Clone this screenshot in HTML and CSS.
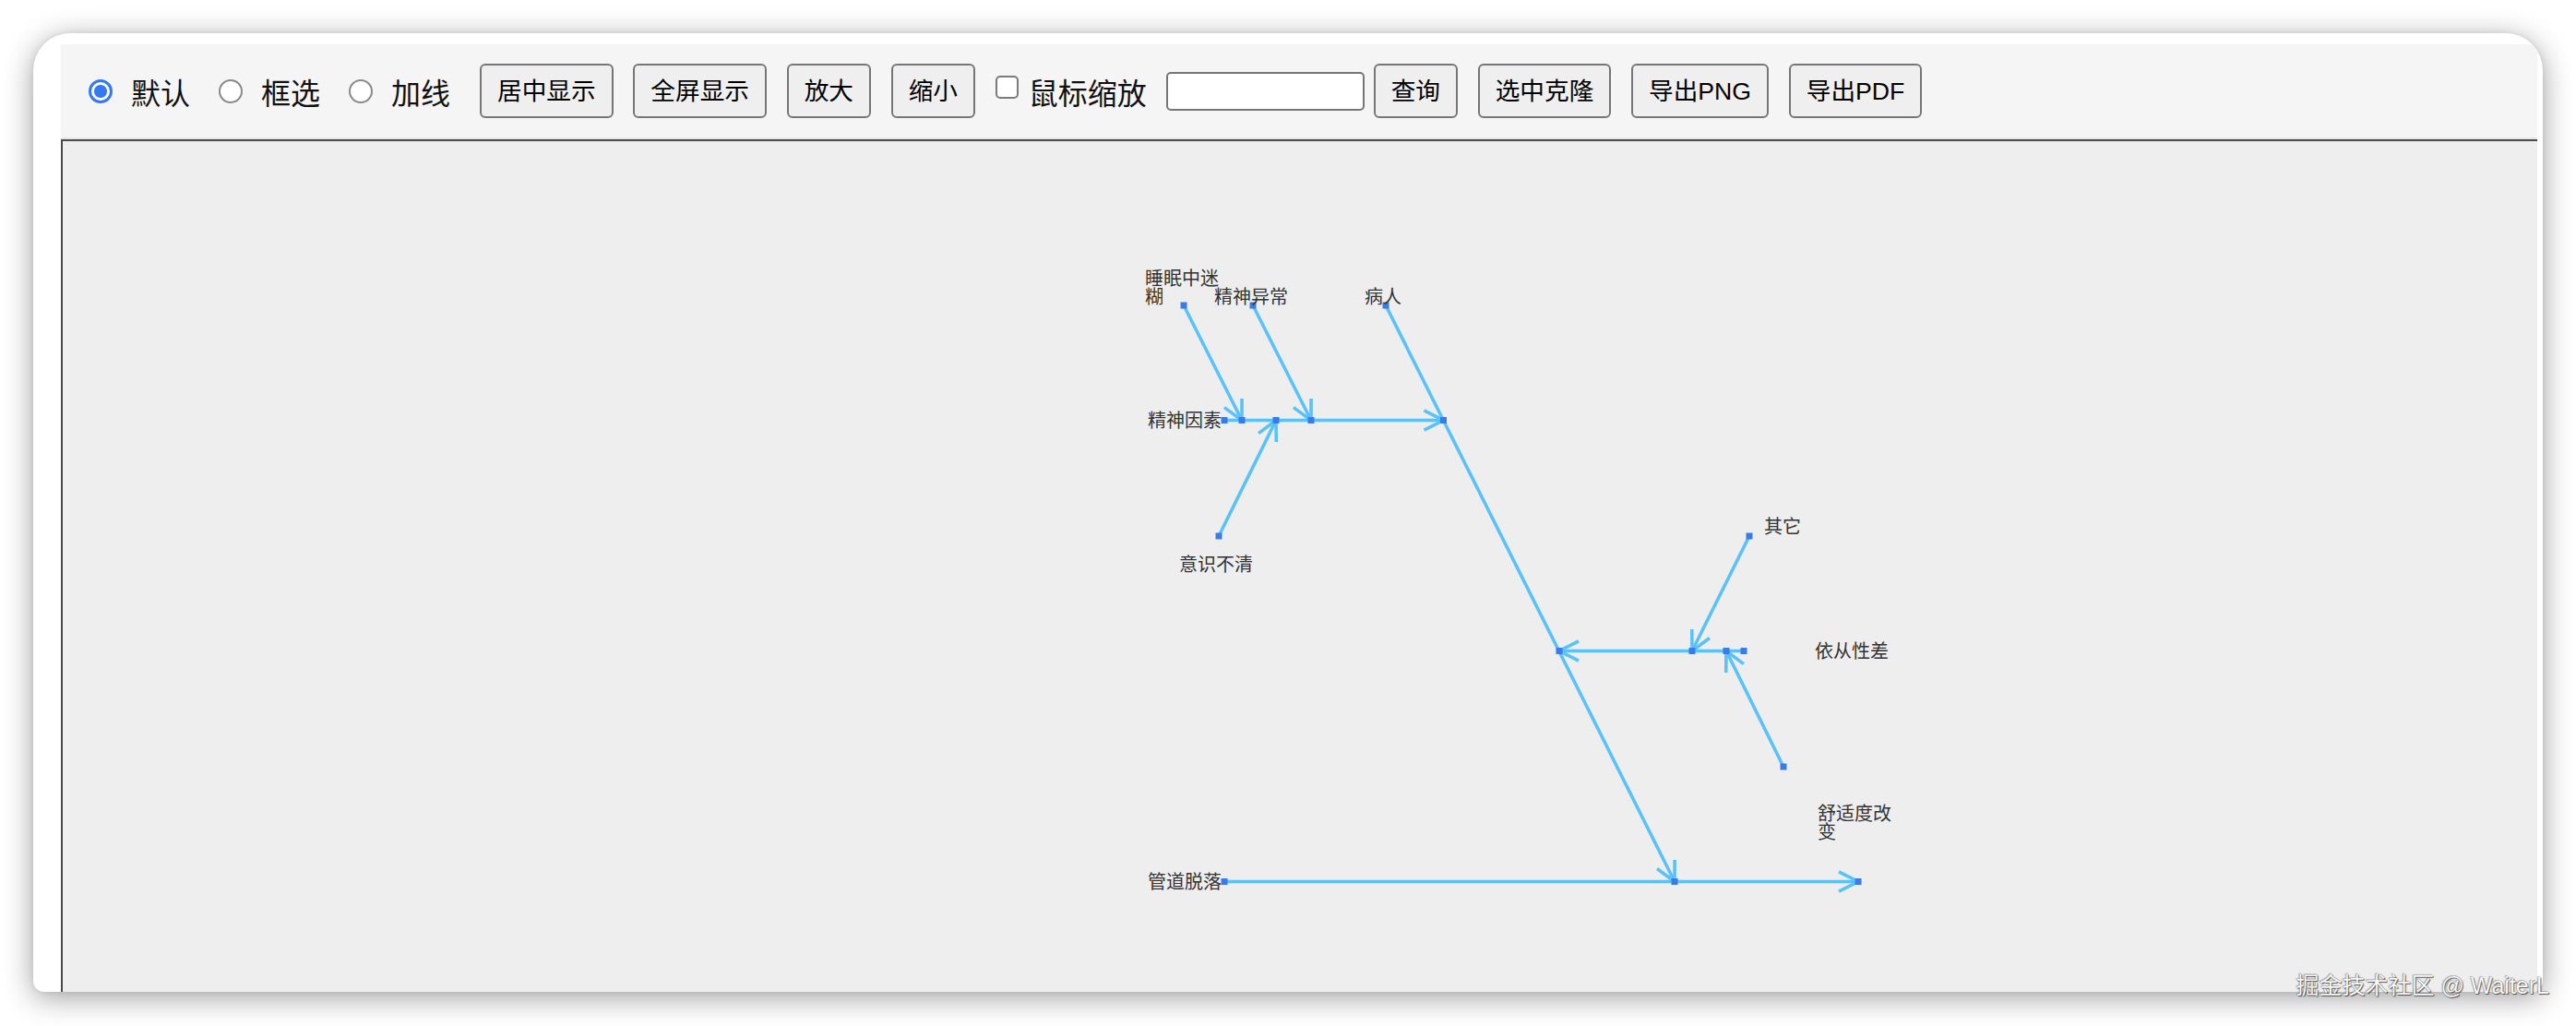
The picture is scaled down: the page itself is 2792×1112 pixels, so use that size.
FILE: index.html
```html
<!DOCTYPE html>
<html lang="zh-CN">
<head>
<meta charset="utf-8">
<title>鱼骨图</title>
<link rel="stylesheet" href="styles.css">
</head>
<body>
<div class="window">
  <div class="app">
    <div class="toolbar">
      <label class="opt"><input class="radio" type="radio" name="mode" checked><span class="opt-text">默认</span></label>
      <label class="opt"><input class="radio" type="radio" name="mode"><span class="opt-text">框选</span></label>
      <label class="opt opt-last"><input class="radio" type="radio" name="mode"><span class="opt-text">加线</span></label>
      <button class="btn">居中显示</button>
      <button class="btn">全屏显示</button>
      <button class="btn">放大</button>
      <button class="btn">缩小</button>
      <label class="check"><input class="checkbox" type="checkbox"><span class="opt-text">鼠标缩放</span></label>
      <input class="search" type="text">
      <button class="btn">查询</button>
      <button class="btn">选中克隆</button>
      <button class="btn">导出PNG</button>
      <button class="btn">导出PDF</button>
    </div>
    <div class="canvas">
      <svg class="diagram" width="2682" height="922" viewBox="68 153 2682 922" xmlns="http://www.w3.org/2000/svg">
        <defs>
          <marker id="arr" markerUnits="userSpaceOnUse" markerWidth="40" markerHeight="40" viewBox="-30 -20 40 40" refX="0" refY="0" orient="auto">
            <path class="ah" d="M-21,-10.7 L0,0 L-21,10.7"/>
          </marker>
        </defs>
        <g class="links">
          <path class="ln" d="M1283 331 L1346 455.5"/>
          <path class="ln" d="M1358 331 L1421 455.5"/>
          <path class="ln" d="M1321 581 L1383 455.5"/>
          <path class="ln" d="M1327 455.5 L1564.5 455.5"/>
          <path class="ln" d="M1502 331 L1815 955.5"/>
          <path class="ln" d="M1890 705.5 L1690 705.5"/>
          <path class="ln" d="M1896 581 L1834 705.5"/>
          <path class="ln" d="M1933 831 L1871 705.5"/>
          <path class="ln" d="M1327 955.5 L2014 955.5"/>
        </g>
        <g class="nodes">
          <rect class="nd" x="1279.5" y="327.5" width="7" height="7"/>
          <rect class="nd" x="1354.5" y="327.5" width="7" height="7"/>
          <rect class="nd" x="1498.5" y="327.5" width="7" height="7"/>
          <rect class="nd" x="1323.5" y="452" width="7" height="7"/>
          <rect class="nd" x="1342.5" y="452" width="7" height="7"/>
          <rect class="nd" x="1379.5" y="452" width="7" height="7"/>
          <rect class="nd" x="1417.5" y="452" width="7" height="7"/>
          <rect class="nd" x="1561" y="452" width="7" height="7"/>
          <rect class="nd" x="1317.5" y="577.5" width="7" height="7"/>
          <rect class="nd" x="1892.5" y="577.5" width="7" height="7"/>
          <rect class="nd" x="1686.5" y="702" width="7" height="7"/>
          <rect class="nd" x="1830.5" y="702" width="7" height="7"/>
          <rect class="nd" x="1867.5" y="702" width="7" height="7"/>
          <rect class="nd" x="1886.5" y="702" width="7" height="7"/>
          <rect class="nd" x="1929.5" y="827.5" width="7" height="7"/>
          <rect class="nd" x="1323.5" y="952" width="7" height="7"/>
          <rect class="nd" x="1811.5" y="952" width="7" height="7"/>
          <rect class="nd" x="2010.5" y="952" width="7" height="7"/>
        </g>
        <g class="labels">
          <text class="lbl" x="1241" y="309">睡眠中迷</text>
          <text class="lbl" x="1241" y="329">糊</text>
          <text class="lbl" x="1316" y="329">精神异常</text>
          <text class="lbl" x="1479" y="329">病人</text>
          <text class="lbl" x="1244" y="463">精神因素</text>
          <text class="lbl" x="1278" y="619">意识不清</text>
          <text class="lbl" x="1912" y="578">其它</text>
          <text class="lbl" x="1967" y="713">依从性差</text>
          <text class="lbl" x="1970" y="889">舒适度改</text>
          <text class="lbl" x="1970" y="909">变</text>
          <text class="lbl" x="1244" y="963">管道脱落</text>
        </g>
      </svg>
    </div>
  </div>
</div>
<div class="watermark">掘金技术社区 @ WaiterL</div>
</body>
</html>
```

FILE: styles.css
```css
html, body {
  margin: 0;
  padding: 0;
}

body {
  width: 2792px;
  height: 1112px;
  box-sizing: border-box;
  padding: 36px 36px 37px 36px;
  background: #ffffff;
  font-family: "Liberation Sans", "Noto Sans CJK SC", sans-serif;
  position: relative;
  overflow: hidden;
}

.window {
  width: 2720px;
  height: 1039px;
  background: #ffffff;
  border-radius: 40px 40px 12px 12px;
  box-shadow: 0 6px 32px rgba(0, 0, 0, 0.38), 0 0 6px rgba(0, 0, 0, 0.08);
  overflow: hidden;
  box-sizing: border-box;
  padding: 12px 6px 0 30px;
}

.app {
  height: 100%;
  display: flex;
  flex-direction: column;
  background: #f5f5f5;
}

.toolbar {
  height: 101px;
  flex: none;
  display: flex;
  align-items: center;
  padding-left: 30px;
  background: #f5f5f5;
  border-bottom: 2px solid #e6e6e6;
}

.opt {
  display: flex;
  align-items: center;
  margin-right: 31px;
}

.opt-last {
  margin-right: 32px;
}

.opt-text {
  font-family: "Noto Sans CJK SC", sans-serif;
  font-size: 32px;
  line-height: 40px;
  color: #111;
}

.radio {
  -webkit-appearance: none;
  appearance: none;
  margin: 0 20px 0 0;
  width: 26px;
  height: 26px;
  box-sizing: border-box;
  border-radius: 50%;
  border: 2px solid #8a8a8a;
  background: #ffffff;
}

.radio:checked {
  border: 3px solid #3478f6;
  background: radial-gradient(circle, #3478f6 0, #3478f6 6.5px, #ffffff 7.5px);
}

.check {
  display: flex;
  align-items: center;
  margin-right: 21px;
}

.checkbox {
  -webkit-appearance: none;
  appearance: none;
  margin: 0 11px 8px 0;
  width: 25px;
  height: 25px;
  box-sizing: border-box;
  border: 2px solid #7a7a7a;
  border-radius: 5px;
  background: #ffffff;
}

.search {
  width: 215px;
  height: 42px;
  box-sizing: border-box;
  margin: 0 10px 0 0;
  border: 2px solid #767676;
  border-radius: 5px;
  background: #ffffff;
  padding: 0 6px;
}

.btn {
  height: 59px;
  box-sizing: border-box;
  margin: 0 21.7px 0 0;
  padding: 0 17px;
  border: 2px solid #767676;
  border-radius: 6px;
  background: #efefef;
  color: #000;
  font-family: "Liberation Sans", "Noto Sans CJK SC", sans-serif;
  font-size: 26.67px;
  line-height: 30px;
  white-space: nowrap;
}

.canvas {
  flex: 1;
  background: #eeeeee;
  border-top: 2px solid #4a4a4a;
  border-left: 2px solid #4a4a4a;
  overflow: hidden;
}

.diagram {
  display: block;
}

.ln {
  stroke: #5ac2f7;
  stroke-width: 3.6;
  fill: none;
  marker-end: url(#arr);
}

.ah {
  stroke: #5ac2f7;
  stroke-width: 3.6;
  fill: none;
}

.nd {
  fill: #3b7be6;
}

.lbl {
  font-family: "Noto Sans CJK SC", sans-serif;
  font-size: 20px;
  fill: #333333;
}

.watermark {
  position: absolute;
  right: 29px;
  top: 1052px;
  font-family: "Liberation Sans", "Noto Sans CJK SC", sans-serif;
  font-size: 25px;
  line-height: 32px;
  color: #f7f7f7;
  white-space: nowrap;
  text-shadow: 0 0 1px #444, 1px 1px 1px rgba(0, 0, 0, 0.6), -1px -1px 1px rgba(0, 0, 0, 0.2);
}
```
